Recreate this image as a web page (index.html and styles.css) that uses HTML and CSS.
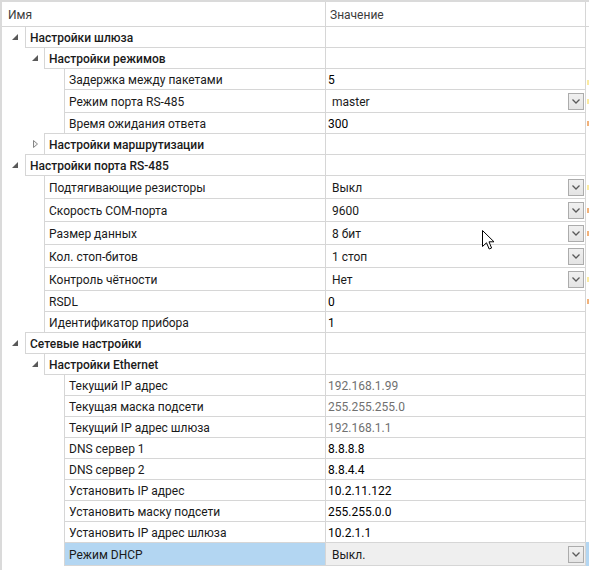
FILE: index.html
```html
<!DOCTYPE html>
<html lang="ru">
<head>
<meta charset="utf-8">
<title>Настройки</title>
<link rel="stylesheet" href="styles.css">
</head>
<body>
<div class="frame">
  <div class="head">
    <div class="hname">Имя</div>
    <div class="hval">Значение</div>
    <div class="mark"></div>
  </div>

  <div class="row grp">
    <div class="ind l1"><svg class="tri" width="6" height="6" viewBox="0 0 6 6"><polygon points="6,0 6,6 0,6"/></svg></div>
    <div class="name">Настройки шлюза</div><div class="val"></div><div class="mark"></div>
  </div>
  <div class="row grp">
    <div class="ind l2"><svg class="tri" width="6" height="6" viewBox="0 0 6 6"><polygon points="6,0 6,6 0,6"/></svg></div>
    <div class="name">Настройки режимов</div><div class="val"></div><div class="mark"></div>
  </div>
  <div class="row">
    <div class="ind l3"></div>
    <div class="name">Задержка между пакетами</div><div class="val">5</div><div class="mark"><span class="mk y low"></span></div>
  </div>
  <div class="row dd">
    <div class="ind l3"></div>
    <div class="name">Режим порта RS-485</div>
    <div class="val combo"><span>master</span><span class="btn"><svg width="8" height="5" viewBox="0 0 8 5"><polyline points="0.5,0.5 4,4 7.5,0.5"/></svg></span></div>
    <div class="mark"><span class="mk y"></span></div>
  </div>
  <div class="row">
    <div class="ind l3"></div>
    <div class="name">Время ожидания ответа</div><div class="val">300</div><div class="mark"><span class="mk o"></span></div>
  </div>
  <div class="row grp">
    <div class="ind l2"><svg class="tric" width="5" height="8" viewBox="0 0 5 8"><polygon points="0.5,0.5 4.5,4 0.5,7.5"/></svg></div>
    <div class="name">Настройки маршрутизации</div><div class="val"></div><div class="mark"></div>
  </div>

  <div class="row grp">
    <div class="ind l1"><svg class="tri" width="6" height="6" viewBox="0 0 6 6"><polygon points="6,0 6,6 0,6"/></svg></div>
    <div class="name">Настройки порта RS-485</div><div class="val"></div><div class="mark"></div>
  </div>
  <div class="row dd">
    <div class="ind l2"></div>
    <div class="name">Подтягивающие резисторы</div>
    <div class="val combo"><span>Выкл</span><span class="btn"><svg width="8" height="5" viewBox="0 0 8 5"><polyline points="0.5,0.5 4,4 7.5,0.5"/></svg></span></div>
    <div class="mark"><span class="mk y"></span></div>
  </div>
  <div class="row dd">
    <div class="ind l2"></div>
    <div class="name">Скорость COM-порта</div>
    <div class="val combo"><span>9600</span><span class="btn"><svg width="8" height="5" viewBox="0 0 8 5"><polyline points="0.5,0.5 4,4 7.5,0.5"/></svg></span></div>
    <div class="mark"><span class="mk o"></span></div>
  </div>
  <div class="row dd">
    <div class="ind l2"></div>
    <div class="name">Размер данных</div>
    <div class="val combo"><span>8 бит</span><span class="btn"><svg width="8" height="5" viewBox="0 0 8 5"><polyline points="0.5,0.5 4,4 7.5,0.5"/></svg></span></div>
    <div class="mark"><span class="mk o"></span></div>
  </div>
  <div class="row dd">
    <div class="ind l2"></div>
    <div class="name">Кол. стоп-битов</div>
    <div class="val combo"><span>1 стоп</span><span class="btn"><svg width="8" height="5" viewBox="0 0 8 5"><polyline points="0.5,0.5 4,4 7.5,0.5"/></svg></span></div>
    <div class="mark"></div>
  </div>
  <div class="row dd">
    <div class="ind l2"></div>
    <div class="name">Контроль чётности</div>
    <div class="val combo"><span>Нет</span><span class="btn"><svg width="8" height="5" viewBox="0 0 8 5"><polyline points="0.5,0.5 4,4 7.5,0.5"/></svg></span></div>
    <div class="mark"><span class="mk y"></span></div>
  </div>
  <div class="row">
    <div class="ind l2"></div>
    <div class="name">RSDL</div><div class="val">0</div><div class="mark"><span class="mk o"></span></div>
  </div>
  <div class="row">
    <div class="ind l2"></div>
    <div class="name">Идентификатор прибора</div><div class="val">1</div><div class="mark"></div>
  </div>

  <div class="row grp">
    <div class="ind l1"><svg class="tri" width="6" height="6" viewBox="0 0 6 6"><polygon points="6,0 6,6 0,6"/></svg></div>
    <div class="name">Сетевые настройки</div><div class="val"></div><div class="mark"></div>
  </div>
  <div class="row grp">
    <div class="ind l2"><svg class="tri" width="6" height="6" viewBox="0 0 6 6"><polygon points="6,0 6,6 0,6"/></svg></div>
    <div class="name">Настройки Ethernet</div><div class="val"></div><div class="mark"></div>
  </div>
  <div class="row">
    <div class="ind l3"></div>
    <div class="name">Текущий IP адрес</div><div class="val ro">192.168.1.99</div><div class="mark"></div>
  </div>
  <div class="row">
    <div class="ind l3"></div>
    <div class="name">Текущая маска подсети</div><div class="val ro">255.255.255.0</div><div class="mark"></div>
  </div>
  <div class="row">
    <div class="ind l3"></div>
    <div class="name">Текущий IP адрес шлюза</div><div class="val ro">192.168.1.1</div><div class="mark"></div>
  </div>
  <div class="row">
    <div class="ind l3"></div>
    <div class="name">DNS сервер 1</div><div class="val">8.8.8.8</div><div class="mark"></div>
  </div>
  <div class="row">
    <div class="ind l3"></div>
    <div class="name">DNS сервер 2</div><div class="val">8.8.4.4</div><div class="mark"></div>
  </div>
  <div class="row">
    <div class="ind l3"></div>
    <div class="name">Установить IP адрес</div><div class="val">10.2.11.122</div><div class="mark"></div>
  </div>
  <div class="row">
    <div class="ind l3"></div>
    <div class="name">Установить маску подсети</div><div class="val">255.255.0.0</div><div class="mark"></div>
  </div>
  <div class="row">
    <div class="ind l3"></div>
    <div class="name">Установить IP адрес шлюза</div><div class="val">10.2.1.1</div><div class="mark"></div>
  </div>
  <div class="row dd sel">
    <div class="ind l3"></div>
    <div class="name">Режим DHCP</div>
    <div class="val combo"><span>Выкл.</span><span class="btn"><svg width="8" height="5" viewBox="0 0 8 5"><polyline points="0.5,0.5 4,4 7.5,0.5"/></svg></span></div>
    <div class="mark"></div>
  </div>
</div>

<svg class="cursor" width="13" height="20" viewBox="0 0 13 20"><polygon points="0.5,0.5 0.5,16.5 4.5,12.8 7.2,19 9.6,18 7,11.8 12,11.8"/></svg>
</body>
</html>
```

FILE: styles.css
```css
html, body {
  margin: 0;
  padding: 0;
  background: #ffffff;
}

body {
  font-family: Roboto, "Noto Sans", sans-serif;
  font-size: 12px;
  color: #1a1a1a;
  width: 589px;
  height: 570px;
  overflow: hidden;
}

.frame {
  box-sizing: border-box;
  width: 589px;
  height: 570px;
  border-left: 2px solid #dadada;
  border-top: 2px solid #dadada;
}

.head {
  display: flex;
  height: 25px;
  box-sizing: border-box;
  border-bottom: 1px solid #d6d6d6;
  color: #3c3c3c;
}

.hname {
  flex: 1;
  padding-left: 6px;
  padding-top: 1px;
  display: flex;
  align-items: center;
}

.hval {
  flex: none;
  width: 261px;
  box-sizing: border-box;
  border-left: 1px solid #d6d6d6;
  border-right: 1px solid #d6d6d6;
  padding-left: 4px;
  padding-top: 1px;
  display: flex;
  align-items: center;
}

.mark {
  flex: none;
  width: 3px;
  display: flex;
  align-items: center;
}

.row {
  display: flex;
  height: 22px;
  margin-top: -1px;
}

.row.dd {
  height: 24px;
}

.ind {
  flex: none;
  display: flex;
  justify-content: flex-end;
  align-items: center;
  box-sizing: border-box;
  padding-right: 7px;
}

.ind.l1 { width: 23px; }
.ind.l2 { width: 42px; padding-right: 6px; }
.ind.l3 { width: 62px; }

.tri polygon {
  fill: #595959;
}

.tric polygon {
  fill: #f4f4f4;
  stroke: #858585;
  stroke-width: 1;
}

.name {
  flex: 1;
  min-width: 0;
  box-sizing: border-box;
  border-left: 1px solid #d6d6d6;
  border-top: 1px solid #d6d6d6;
  border-bottom: 1px solid #d6d6d6;
  padding-left: 4px;
  padding-top: 1px;
  display: flex;
  align-items: center;
  white-space: nowrap;
  overflow: hidden;
}

.grp .name {
  font-weight: 500;
}

.val {
  flex: none;
  width: 261px;
  box-sizing: border-box;
  border: 1px solid #d6d6d6;
  padding-left: 2px;
  padding-top: 1px;
  display: flex;
  align-items: center;
  color: #000000;
  white-space: nowrap;
}

.val.ro {
  color: #707070;
}

.val.combo {
  padding-left: 6px;
  padding-right: 1px;
  padding-top: 0;
  justify-content: space-between;
  color: #1a1a1a;
}

.val.combo span:first-child {
  padding-top: 1px;
}

.btn {
  width: 16px;
  height: 17px;
  box-sizing: border-box;
  border: 1px solid #acacac;
  background: linear-gradient(#f0f0f0, #e4e4e4);
  display: flex;
  align-items: center;
  justify-content: center;
}

.btn polyline {
  fill: none;
  stroke: #5a5a5a;
  stroke-width: 1.3;
}

.mk {
  display: block;
  width: 2px;
  height: 5px;
  margin-left: 1px;
}

.mk.y { background: #fbeaa0; }
.mk.o { background: #f2b27a; }
.mk.low { margin-top: 6px; }

.sel .name {
  background: #b3d6f2;
}

.sel .mark {
  background: #b3d6f2;
}

.sel .val {
  background: #efefef;
}

.cursor {
  position: absolute;
  left: 482px;
  top: 230px;
}

.cursor polygon {
  fill: #ffffff;
  stroke: #000000;
  stroke-width: 1;
  stroke-linejoin: miter;
}
```
